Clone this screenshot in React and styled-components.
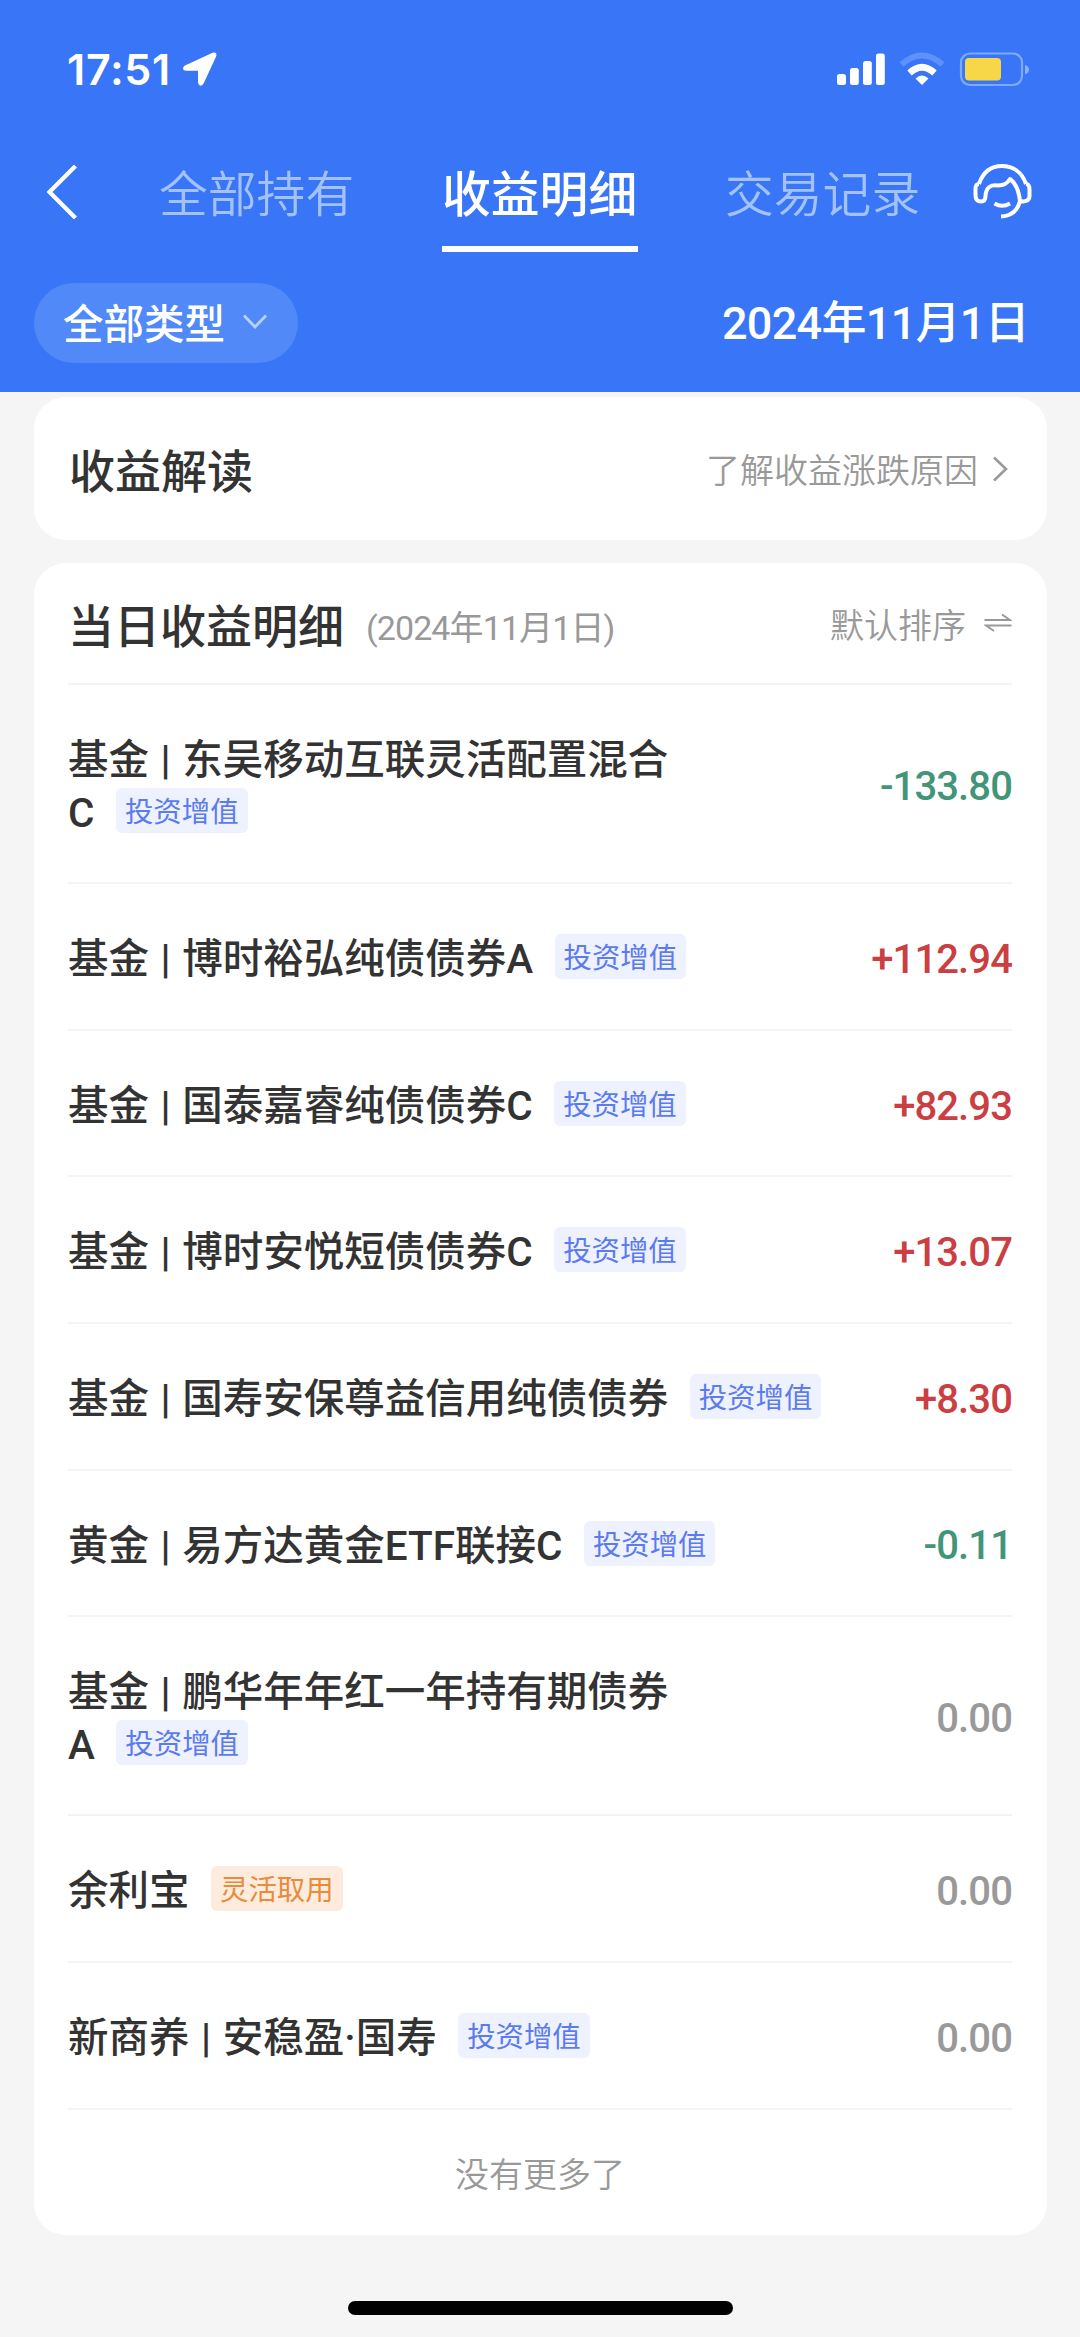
import React from 'react';
import styled, { createGlobalStyle } from 'styled-components';

const GlobalStyle = createGlobalStyle`
  * {
    box-sizing: border-box;
  }
  body {
    margin: 0;
    background: #f5f5f5;
    font-family: Roboto, "Noto Sans CJK SC", sans-serif;
    -webkit-font-smoothing: antialiased;
  }
`;

const records = [
  { name: '基金 | 东吴移动互联灵活配置混合', tail: 'C', tag: '投资增值', amount: '-133.80' },
  { name: '基金 | 博时裕弘纯债债券A', tag: '投资增值', amount: '+112.94' },
  { name: '基金 | 国泰嘉睿纯债债券C', tag: '投资增值', amount: '+82.93' },
  { name: '基金 | 博时安悦短债债券C', tag: '投资增值', amount: '+13.07' },
  { name: '基金 | 国寿安保尊益信用纯债债券', tag: '投资增值', amount: '+8.30' },
  { name: '黄金 | 易方达黄金ETF联接C', tag: '投资增值', amount: '-0.11' },
  { name: '基金 | 鹏华年年红一年持有期债券', tail: 'A', tag: '投资增值', amount: '0.00' },
  { name: '余利宝', tag: '灵活取用', warm: true, amount: '0.00' },
  { name: '新商养 | 安稳盈·国寿', tag: '投资增值', amount: '0.00' },
];

const amountColor = (amount) => {
  if (amount.startsWith('+')) return '#cb3e42';
  if (amount.startsWith('-')) return '#429579';
  return '#999999';
};

export default function App() {
  return (
    <Page>
      <GlobalStyle />
      <Header>
        <StatusBar>
          <Clock>17:51</Clock>
          <LocationIcon />
          <StatusIcons />
        </StatusBar>
        <NavBar>
          <BackIcon />
          <Tabs>
            <Tab>全部持有</Tab>
            <Tab $active>收益明细</Tab>
            <Tab>交易记录</Tab>
          </Tabs>
          <ServiceIcon />
        </NavBar>
        <FilterBar>
          <TypeButton>
            全部类型
            <svg width="24" height="16" viewBox="0 0 24 16" fill="none">
              <path d="M1 1.5 L12 13 L23 1.5" stroke="#b9d2fd" strokeWidth="2.8" />
            </svg>
          </TypeButton>
          <DateLabel>2024年11月1日</DateLabel>
        </FilterBar>
      </Header>

      <Content>
        <InsightCard>
          <Title>收益解读</Title>
          <Action $top={2}>
            了解收益涨跌原因
            <svg width="15" height="26" viewBox="0 0 15 26" fill="none">
              <path d="M1 1.5 L13 13 L1 24.5" stroke="#999" strokeWidth="2.6" />
            </svg>
          </Action>
        </InsightCard>

        <ListCard>
          <ListHeader>
            <Title>当日收益明细</Title>
            <SubTitle>(2024年11月1日)</SubTitle>
            <Action $gap={18}>
              默认排序
              <svg width="28" height="20" viewBox="0 0 28 20" fill="none">
                <path d="M0.5 7 H26 L18 1.5 M27.5 12.5 H2 L10 18" stroke="#999" strokeWidth="2" />
              </svg>
            </Action>
          </ListHeader>
          {records.map((item) => (
            <Row key={item.name}>
              <Name>
                {item.name}
                {item.tail && <br />}
                {item.tail}
                <Tag $warm={item.warm}>{item.tag}</Tag>
              </Name>
              <Amount $color={amountColor(item.amount)}>{item.amount}</Amount>
            </Row>
          ))}
          <NoMore>没有更多了</NoMore>
        </ListCard>
      </Content>
      <HomeIndicator />
    </Page>
  );
}

function LocationIcon() {
  return (
    <svg width="34" height="34" viewBox="0 0 34 34" fill="#fff">
      <path d="M2 13.6 L29.6 0.7 Q34.4 -0.6 33.2 4.2 L20.6 31.6 Q18.6 35 16 32.8 Q15 31.8 15 30 V18.8 H3.6 Q-0.4 18.6 0.2 15.8 Q0.6 14.2 2 13.6 Z" />
    </svg>
  );
}

// signal, wifi and battery
function StatusIcons() {
  return (
    <StatusSvg width="193" height="36" viewBox="837 50 193 36" fill="none">
      <rect x="837" y="73" width="9" height="11" rx="2.5" fill="#fff" />
      <rect x="850" y="67" width="8.8" height="17" rx="2.5" fill="#fff" />
      <rect x="863" y="60" width="8.8" height="24" rx="2.5" fill="#fff" />
      <rect x="876" y="52.5" width="8.8" height="31.5" rx="2.5" fill="#fff" />
      <path d="M901.5 63.5 Q922 45.5 942.5 63.5" stroke="#5e92fb" strokeWidth="6" />
      <path d="M909.5 72 Q922 60.5 934.5 72" stroke="#fff" strokeWidth="6.5" />
      <path d="M915.5 77.6 Q922 71.5 928.5 77.6 L922 84 Z" fill="#fff" />
      <rect x="961" y="52.5" width="61" height="31.5" rx="9" stroke="#7fa9fb" strokeWidth="2.2" />
      <rect x="965" y="57" width="36" height="22.5" rx="4" fill="#f7d748" />
      <path d="M1025 64 Q1029 65 1029 68.5 Q1029 72 1025 73.3 Z" fill="#8ab0fb" />
    </StatusSvg>
  );
}

function BackIcon() {
  return (
    <NavSvg width="32" height="54" viewBox="0 0 32 54" fill="none">
      <path d="M29.5 1 L3.5 27 L29.5 53" stroke="#fff" strokeWidth="4.2" />
    </NavSvg>
  );
}

function ServiceIcon() {
  return (
    <NavSvg width="60" height="58" viewBox="972 163 60 58" fill="none" stroke="#fff" strokeWidth="4" strokeLinejoin="round">
      <path d="M979 184 C983 172 991 166 1002 166 C1013 166 1022 172 1026 184" />
      <path d="M979 184 Q975.5 184 975.5 189 V195 Q975.5 201.5 981 201.5 Q985.5 201.5 985.5 196 C986 187 991 184.5 998 185.5 C1004 185.5 1007 184 1010 179 C1017 184 1019 192 1020 201 C1026 202.5 1029.5 200 1029.5 196 V190 Q1029.5 184 1026 184" />
      <path d="M1020 201 Q1016 216 1001 216.5" />
      <path d="M994.5 203.5 Q1002 208 1010 203.5" />
    </NavSvg>
  );
}

const Page = styled.div`
  display: flex;
  flex-direction: column;
  width: 1080px;
  height: 2337px;
  overflow: hidden;
  background: #f5f5f5;
`;

const Header = styled.header`
  height: 392px;
  flex: none;
  background: #3975f7;
  color: #fff;
`;

const StatusBar = styled.div`
  display: flex;
  align-items: center;
  height: 138px;
  padding: 0 50px 1px 67px;
`;

const Clock = styled.span`
  width: 116px;
  font-family: Inter, sans-serif;
  font-size: 43px;
  font-weight: 600;
  letter-spacing: 0.7px;
`;

const StatusSvg = styled.svg`
  margin-left: auto;
`;

const NavBar = styled.nav`
  display: flex;
  align-items: center;
  height: 114px;
  padding: 0 48px 0 46px;
`;

const NavSvg = styled.svg`
  flex: none;
  margin-bottom: 7px;
`;

const Tabs = styled.div`
  display: flex;
  flex: 1;
  gap: 87px;
  height: 100%;
  padding-left: 81px;
`;

const Tab = styled.span`
  height: 114px;
  width: 196px;
  font-size: 48.8px;
  line-height: 115px;
  white-space: nowrap;
  font-weight: ${(props) => (props.$active ? 500 : 350)};
  color: ${(props) => (props.$active ? '#fff' : '#a3c2fc')};
  background: ${(props) =>
    props.$active ? 'linear-gradient(#fff, #fff) bottom / 100% 6px no-repeat' : 'none'};
`;

const FilterBar = styled.div`
  display: flex;
  align-items: center;
  justify-content: space-between;
  height: 140px;
  padding: 2px 51px 0 34px;
`;

const TypeButton = styled.button`
  display: flex;
  align-items: center;
  justify-content: space-between;
  width: 264px;
  height: 80px;
  padding: 0 31px 3px 29px;
  border: none;
  border-radius: 40px;
  background: #518af8;
  color: #fff;
  font-family: inherit;
  font-size: 40.5px;
  font-weight: 500;
`;

const DateLabel = styled.span`
  padding-bottom: 8px;
  font-size: 45px;
  font-weight: 500;
  letter-spacing: -0.7px;
`;

const Content = styled.main`
  flex: none;
  height: 1843px;
  padding: 5px 33px 0 34px;
`;

const Card = styled.section`
  border-radius: 32px;
  background: #fff;
`;

const InsightCard = styled(Card)`
  display: flex;
  align-items: center;
  height: 143px;
  padding: 0 39px 2px 35px;
`;

const ListCard = styled(Card)`
  height: 1672px;
  margin-top: 23px;
  padding: 0 35px 0 34px;
`;

const ListHeader = styled.div`
  display: flex;
  align-items: center;
  height: 122px;
  border-bottom: 2px solid #f4f4f4;
`;

const Title = styled.h2`
  margin: 0;
  font-size: 46px;
  font-weight: 500;
  color: #333;
`;

const SubTitle = styled.span`
  margin-left: 22px;
  padding-top: 5px;
  font-size: 34px;
  font-weight: 400;
  letter-spacing: -0.9px;
  color: #999;
`;

const Action = styled.span`
  display: flex;
  align-items: center;
  gap: ${(props) => props.$gap || 15}px;
  margin-left: auto;
  padding-top: ${(props) => props.$top || 0}px;
  font-size: 34px;
  font-weight: 350;
  color: #999;
`;

const Row = styled.div`
  display: flex;
  align-items: center;
  justify-content: space-between;
  padding: 49px 0 43px;
  border-bottom: 2px solid #f4f4f4;
`;

const Name = styled.div`
  font-size: 40.5px;
  font-weight: 500;
  line-height: 52.6px;
  word-spacing: 1.5px;
  white-space: nowrap;
  color: #333;
`;

const Tag = styled.span`
  display: inline-block;
  height: 45px;
  margin: 1px 0 0 21.5px;
  padding: 2px 9px 0;
  border-radius: 6px;
  vertical-align: top;
  font-size: 28.4px;
  font-weight: 400;
  line-height: 45px;
  color: ${(props) => (props.$warm ? '#ea8a3b' : '#5b7bee')};
  background: ${(props) => (props.$warm ? '#fdecdd' : '#eef1fe')};
`;

const Amount = styled.span`
  font-size: 40px;
  font-weight: 500;
  letter-spacing: -0.9px;
  color: ${(props) => props.$color};
`;

const NoMore = styled.div`
  padding-top: 38px;
  text-align: center;
  font-size: 34px;
  font-weight: 350;
  color: #999;
`;

const HomeIndicator = styled.div`
  flex: none;
  width: 385px;
  height: 14px;
  margin: 66px auto 0;
  border-radius: 7px;
  background: #000;
`;
